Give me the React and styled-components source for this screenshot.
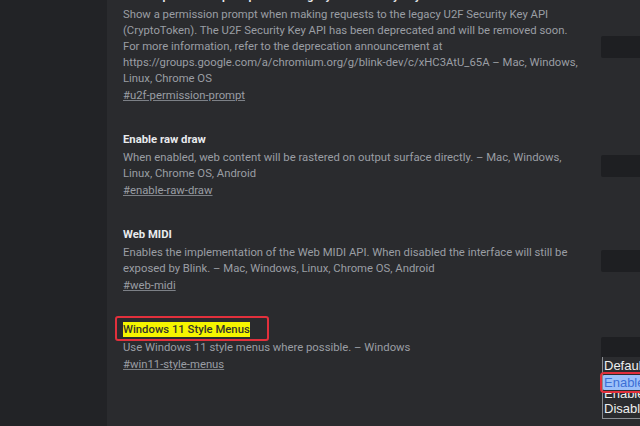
import React from 'react';
import styled, { createGlobalStyle } from 'styled-components';

const Global = createGlobalStyle`
  html, body { margin: 0; padding: 0; background: #2a2b2e; }
  body { font-family: Roboto, "Liberation Sans", Arial, sans-serif; overflow: hidden; }
`;

const FLAGS = [
  {
    title: 'Show a permission prompt for the legacy U2F Security Key API',
    desc: [
      'Show a permission prompt when making requests to the legacy U2F Security Key API',
      '(CryptoToken). The U2F Security Key API has been deprecated and will be removed soon.',
      'For more information, refer to the deprecation announcement at',
      'https://groups.google.com/a/chromium.org/g/blink-dev/c/xHC3AtU_65A – Mac, Windows,',
      'Linux, Chrome OS',
    ],
    link: '#u2f-permission-prompt',
  },
  {
    title: 'Enable raw draw',
    desc: [
      'When enabled, web content will be rastered on output surface directly. – Mac, Windows,',
      'Linux, Chrome OS, Android',
    ],
    link: '#enable-raw-draw',
  },
  {
    title: 'Web MIDI',
    desc: [
      'Enables the implementation of the Web MIDI API. When disabled the interface will still be',
      'exposed by Blink. – Mac, Windows, Linux, Chrome OS, Android',
    ],
    link: '#web-midi',
  },
  {
    title: 'Windows 11 Style Menus',
    desc: ['Use Windows 11 style menus where possible. – Windows'],
    link: '#win11-style-menus',
    marked: true,
    open: true,
  },
];

const OPTIONS = [
  { label: 'Default' },
  { label: 'Enabled', active: true },
  { label: 'Enabled', clipped: true },
  { label: 'Disabled' },
];

const Page = styled.div`
  display: grid;
  grid-template-columns: 107px 1fr;
  height: 426px;
  overflow: hidden;
`;

const Sidebar = styled.div`
  background: #222326;
`;

const Main = styled.div`
  background: #2a2b2e;
  padding-left: 16px;
`;

const List = styled.div`
  display: flex;
  flex-direction: column;
  gap: 28px;
  margin-top: -11px;
`;

const Row = styled.div`
  display: flex;
  align-items: center;
`;

const Text = styled.div`
  width: 478px;
  flex-shrink: 0;
  font-size: 11.3px;
  line-height: 16px;
`;

const Title = styled.div`
  font-weight: 700;
  color: #e8eaed;
  margin-bottom: 2px;
  white-space: nowrap;
`;

const Mark = styled.span`
  position: relative;
  background: #f5f500;
  color: #34342a;
  font-weight: 500;
  padding: 1px 0;

  &::before {
    content: '';
    position: absolute;
    left: -8px;
    right: -19px;
    top: -6px;
    bottom: -4px;
    border: 2px solid #e2303c;
    border-radius: 3px;
  }
`;

const Line = styled.div`
  color: #9a9ea4;
  white-space: nowrap;
`;

const Link = styled.a`
  display: block;
  width: max-content;
  margin-top: 1px;
  color: #9a9ea4;
  text-decoration: underline;
  text-decoration-color: #7c8086;
`;

const Actions = styled.div`
  position: relative;
  flex: 1;
  display: flex;
`;

const Select = styled.div`
  width: 60px;
  height: 22px;
  background: #1e1f22;
  border-radius: 2px;
`;

const Dropdown = styled.div`
  position: absolute;
  top: 20px;
  left: 1px;
  width: 70px;
  background: #2b2c2f;
  border: 1px solid #8a8d92;
  border-top: none;
  padding: 1px 0 2px;
  font-family: "Liberation Sans", Arial, sans-serif;
  font-size: 13px;
  color: #eeeeee;
`;

const Option = styled.div`
  height: ${(p) => (p.$clipped ? '10px' : '15px')};
  line-height: 15px;
  padding-left: 1px;
  overflow: hidden;
  display: flex;
  align-items: flex-end;
  background: ${(p) => (p.$active ? '#9cc0f9' : 'transparent')};
  color: ${(p) => (p.$active ? '#3c6fd6' : '#eeeeee')};
  margin: ${(p) => (p.$active ? '2px 0 1px' : '0')};
  outline: ${(p) => (p.$active ? '2px solid #e2303c' : 'none')};
  outline-offset: 1px;
  border-radius: 1px;
`;

export default function App() {
  return (
    <>
      <Global />
      <Page>
        <Sidebar />
        <Main>
          <List>
            {FLAGS.map((f) => (
              <Row key={f.link}>
                <Text>
                  <Title>{f.marked ? <Mark>{f.title}</Mark> : f.title}</Title>
                  {f.desc.map((l) => (
                    <Line key={l}>{l}</Line>
                  ))}
                  <Link href={f.link}>{f.link}</Link>
                </Text>
                <Actions>
                  <Select />
                  {f.open && (
                    <Dropdown>
                      {OPTIONS.map((o, i) => (
                        <Option key={i} $active={o.active} $clipped={o.clipped}>
                          {o.label}
                        </Option>
                      ))}
                    </Dropdown>
                  )}
                </Actions>
              </Row>
            ))}
          </List>
        </Main>
      </Page>
    </>
  );
}
